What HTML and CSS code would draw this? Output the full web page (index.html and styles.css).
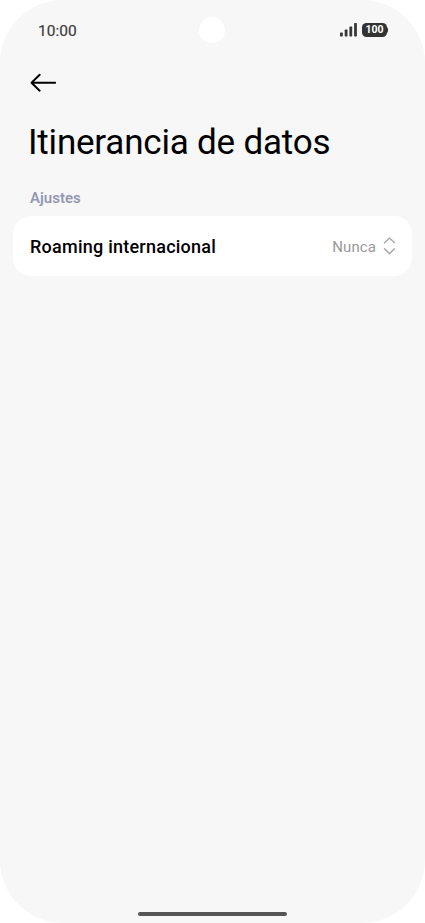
FILE: index.html
```html
<!DOCTYPE html>
<html lang="es">
<head>
<meta charset="utf-8">
<title>Itinerancia de datos</title>
<link rel="stylesheet" href="styles.css">
</head>
<body>
<main class="phone">
  <header class="status">
    <span class="time">10:00</span>
    <span class="camera"></span>
    <span class="indicators">
      <svg class="signal" width="18" height="14" viewBox="0 0 18 14"><rect x="0" y="9.500" width="2.800" height="4" rx="0.700"/><rect x="4.700" y="6.500" width="2.800" height="7" rx="0.700"/><rect x="9.400" y="3.500" width="2.800" height="10" rx="0.700"/><rect x="14.100" y="0" width="2.800" height="13.500" rx="0.700"/></svg>
      <span class="battery">100</span>
    </span>
  </header>
  <svg class="back" width="28" height="20" viewBox="0 0 28 20"><path d="M26.200 9.700H2.500M10.700 1.700L2.500 9.700l8.200 8"/></svg>
  <h1 class="title">Itinerancia de datos</h1>
  <h2 class="section">Ajustes</h2>
  <div class="row">
    <span class="label">Roaming internacional</span>
    <span class="value">Nunca</span>
    <svg class="sort" width="12" height="18" viewBox="0 0 12 18"><path d="M1.500 5.800L6.500 1l5 4.800M1.500 11.800l5 4.800 5-4.800"/></svg>
  </div>
  <div class="home"></div>
</main>
</body>
</html>
```
FILE: styles.css
```css
* { box-sizing: border-box; }
body { margin: 0; background: #fff; font-family: Roboto, sans-serif; }
.phone { display: flex; flex-direction: column; width: 425px; height: 923px; background: #f7f7f7; border-radius: 63px; overflow: hidden; }
.status { display: grid; grid-template-columns: 1fr 26px 1fr; align-items: center; height: 60px; padding: 0 37px 0 38px; }
.time { padding-top: 1px; font-size: 15.500px; font-weight: 450; line-height: 20px; color: #3c3c3c; -webkit-text-stroke: 0.200px #3c3c3c; }
.camera { width: 26px; height: 26px; margin-left: -0.600px; border-radius: 50%; background: #fff; }
.indicators { display: flex; justify-content: flex-end; align-items: center; gap: 4px; }
.signal { fill: #383838; }
.battery { position: relative; width: 25px; height: 14px; margin-right: 1px; border-radius: 4.500px; background: #333; color: #fff; font-size: 10.500px; font-weight: 700; line-height: 14px; text-align: center; }
.battery::after { content: ""; position: absolute; right: -1px; top: 4px; width: 3px; height: 6px; border-radius: 0 2px 2px 0; background: #333; }
.back { margin: 13px 0 0 29px; fill: none; stroke: #000; stroke-width: 1.900; stroke-linecap: round; stroke-linejoin: round; }
.title { margin: 29px 0 0 28px; font-size: 35px; font-weight: 400; line-height: 42px; letter-spacing: -0.200px; }
.section { margin: 24px 0 0 30px; font-size: 15px; line-height: 20px; font-weight: 600; color: #9498b5; }
.row { display: flex; align-items: center; height: 60px; margin: 8px 13px 0; padding: 0 17px; border-radius: 18px; background: #fff; }
.label { flex: 1; font-size: 18px; font-weight: 500; letter-spacing: 0.240px; }
.value { font-size: 15px; line-height: 20px; letter-spacing: 0.100px; color: #999; margin: 1px 7px 0 0; }
.sort { fill: none; stroke: #aaa; stroke-width: 1.500; stroke-linecap: round; stroke-linejoin: round; }
.home { width: 149px; height: 4px; margin: auto auto 7px; border-radius: 2px; background: #555; }
```
